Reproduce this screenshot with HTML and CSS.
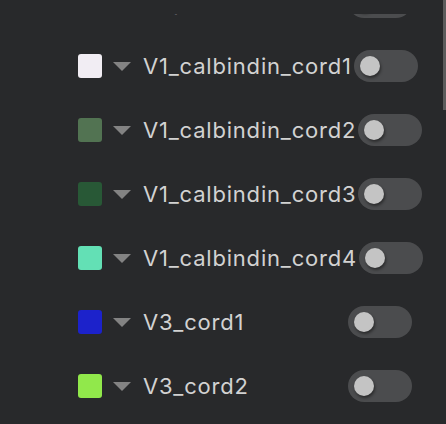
FILE: index.html
```html
<!DOCTYPE html>
<html>
<head>
<meta charset="utf-8">
<link rel="stylesheet" href="styles.css">
</head>
<body>
<div class="panel">
  <div class="list">
    <div class="rows">
      <div class="row">
        <span class="swatch" style="background:#7a7a7a"></span>
        <span class="caret"></span>
        <span class="label">V2p_cord</span>
        <span class="toggle"><span class="knob"></span></span>
      </div>
      <div class="row">
        <span class="swatch" style="background:#f1edf3"></span>
        <span class="caret"></span>
        <span class="label">V1_calbindin_cord1</span>
        <span class="toggle"><span class="knob"></span></span>
      </div>
      <div class="row">
        <span class="swatch" style="background:#527352"></span>
        <span class="caret"></span>
        <span class="label">V1_calbindin_cord2</span>
        <span class="toggle"><span class="knob"></span></span>
      </div>
      <div class="row">
        <span class="swatch" style="background:#285836"></span>
        <span class="caret"></span>
        <span class="label">V1_calbindin_cord3</span>
        <span class="toggle"><span class="knob"></span></span>
      </div>
      <div class="row">
        <span class="swatch" style="background:#63e0b5"></span>
        <span class="caret"></span>
        <span class="label">V1_calbindin_cord4</span>
        <span class="toggle"><span class="knob"></span></span>
      </div>
      <div class="row">
        <span class="swatch" style="background:#1c22cb"></span>
        <span class="caret"></span>
        <span class="label">V3_cord1</span>
        <span class="toggle"><span class="knob"></span></span>
      </div>
      <div class="row">
        <span class="swatch" style="background:#91e84b"></span>
        <span class="caret"></span>
        <span class="label">V3_cord2</span>
        <span class="toggle"><span class="knob"></span></span>
      </div>
    </div>
  </div>
  <div class="scroll-thumb"></div>
</div>
</body>
</html>
```
FILE: styles.css
```css
html, body {
  margin: 0;
  padding: 0;
  background: #28292b;
}
body {
  font-family: Inter, "Noto Sans", sans-serif;
  color: #d2d2d2;
}
.panel {
  position: relative;
  width: 446px;
  height: 424px;
  overflow: hidden;
}
.list {
  margin-top: 14px;
  height: 410px;
  overflow: hidden;
}
.rows {
  margin-top: -44px;
  padding-left: 78px;
  display: flex;
  flex-direction: column;
}
.row {
  height: 64px;
  display: flex;
  align-items: center;
}
.swatch {
  width: 24px;
  height: 24px;
  border-radius: 3px;
  flex: none;
}
.caret {
  width: 0;
  height: 0;
  border-left: 9px solid transparent;
  border-right: 9px solid transparent;
  border-top: 9px solid #838383;
  margin-left: 11px;
  margin-right: 12px;
  flex: none;
}
.label {
  font-size: 22px;
  letter-spacing: 0.8px;
  min-width: 203px;
  white-space: nowrap;
}
.toggle {
  margin-left: 2px;
  width: 64px;
  height: 32px;
  border-radius: 16px;
  background: #4b4c4e;
  display: flex;
  align-items: center;
  padding-left: 6px;
  box-sizing: border-box;
  flex: none;
}
.knob {
  width: 20px;
  height: 20px;
  border-radius: 50%;
  background: #c4c4c4;
  box-shadow: 1px 2px 3px rgba(0,0,0,0.45);
}
.scroll-thumb {
  position: absolute;
  right: 0;
  top: 0;
  width: 3px;
  height: 110px;
  background: #5c5c5c;
}
```
